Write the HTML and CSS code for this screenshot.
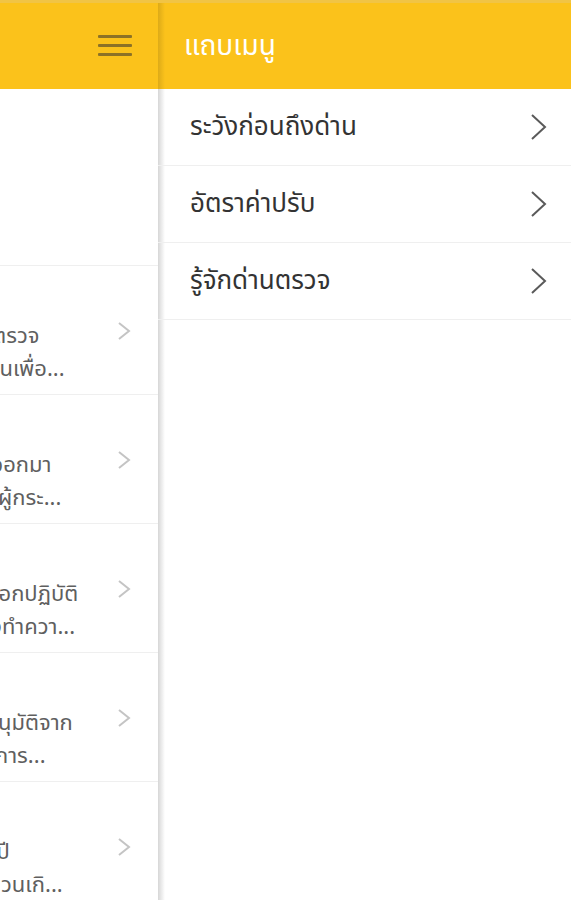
FILE: index.html
```html
<!DOCTYPE html>
<html>

<head>
  <meta charset="utf-8">
  <meta name="viewport" content="width=device-width">
  <title>แถบเมนู</title>
  <link rel="stylesheet" href="styles.css">
</head>

<body>
  <div class="app">
    <!-- หน้าหลักที่ถูกเลื่อนออกไปทางซ้าย -->
    <div class="page">
      <div class="page-inner">
        <div class="bar">
          <span class="burger">
            <i></i>
            <i></i>
            <i></i>
          </span>
        </div>
        <div class="banner"></div>
        <div class="row">
          <div class="row-text">
            <p>เมื่อพบด่านตรวจ</p>
            <p>ตำรวจตั้งด่านเพื่อ...</p>
          </div>
          <svg class="chev" viewBox="0 0 14 20"><polyline points="2,2 12,10 2,18" /></svg>
        </div>
        <div class="row">
          <div class="row-text">
            <p>ให้คนขับรถออกมา</p>
            <p>เพื่อตรวจหาผู้กระ...</p>
          </div>
          <svg class="chev" viewBox="0 0 14 20"><polyline points="2,2 12,10 2,18" /></svg>
        </div>
        <div class="row">
          <div class="row-text">
            <p>ได้รับคำสั่งออกปฏิบัติ</p>
            <p>ในหน้าที่ต้องทำควา...</p>
          </div>
          <svg class="chev" viewBox="0 0 14 20"><polyline points="2,2 12,10 2,18" /></svg>
        </div>
        <div class="row">
          <div class="row-text">
            <p>ที่ได้รับการอนุมัติจาก</p>
            <p>จากผู้บังคับการ...</p>
          </div>
          <svg class="chev" viewBox="0 0 14 20"><polyline points="2,2 12,10 2,18" /></svg>
        </div>
        <div class="row">
          <div class="row-text">
            <p>ก็ตั้งด่านทุกปี</p>
            <p>ในกรณีเร่งด่วนเกิ...</p>
          </div>
          <svg class="chev" viewBox="0 0 14 20"><polyline points="2,2 12,10 2,18" /></svg>
        </div>
      </div>
    </div>

    <!-- แถบเมนู -->
    <div class="drawer">
      <div class="drawer-head">แถบเมนู</div>
      <a class="item" href="#">ระวังก่อนถึงด่าน
        <svg class="arrow" viewBox="0 0 18 28"><polyline points="2,2 15,14 2,26" /></svg>
      </a>
      <a class="item" href="#">อัตราค่าปรับ
        <svg class="arrow" viewBox="0 0 18 28"><polyline points="2,2 15,14 2,26" /></svg>
      </a>
      <a class="item" href="#">รู้จักด่านตรวจ
        <svg class="arrow" viewBox="0 0 18 28"><polyline points="2,2 15,14 2,26" /></svg>
      </a>
    </div>
  </div>
</body>

</html>
```

FILE: styles.css
```css
* {
  margin: 0;
  padding: 0;
  box-sizing: border-box;
}

body {
  --yellow: #fbc21b;
  --line: #efefef;
  font-family: "Noto Sans", "Noto Sans Thai", "Tlwg Typist", sans-serif;
  background: #fff;
  overflow: hidden;
}

.app {
  display: flex;
  width: 571px;
  height: 900px;
  border-top: 3px solid #f1c445;
}

/* หน้าหลัก */
.page {
  width: 158px;
  flex: none;
  overflow: hidden;
}

.page-inner {
  width: 571px;
  margin-left: -413px;
}

.bar {
  height: 86px;
  background: var(--yellow);
  display: flex;
  align-items: center;
  justify-content: flex-end;
  padding-right: 26px;
}

.burger {
  display: flex;
  flex-direction: column;
  gap: 6px;
  width: 34px;
  margin-top: -1px;
}

.burger i {
  display: block;
  height: 3px;
  background: #8d7226;
  border-radius: 1px;
}

.banner {
  height: 177px;
  border-bottom: 1px solid var(--line);
}

.row {
  height: 129px;
  display: flex;
  align-items: flex-start;
  padding-left: 308px;
  padding-right: 27px;
  border-bottom: 1px solid var(--line);
}

.row-text {
  flex: 1;
  padding-top: 52px;
  color: #5f5f5f;
  font-size: 22px;
  line-height: 33px;
  white-space: nowrap;
  overflow: hidden;
}

.chev {
  width: 14px;
  height: 20px;
  margin-top: 55px;
  fill: none;
  stroke: #c4c4c4;
  stroke-width: 2;
}

/* แถบเมนู */
.drawer {
  flex: 1;
  display: flex;
  flex-direction: column;
  background: linear-gradient(90deg, rgba(0, 0, 0, .16), rgba(0, 0, 0, 0) 7px) #fff;
}

.drawer-head {
  height: 86px;
  display: flex;
  align-items: center;
  padding-left: 26px;
  background: linear-gradient(90deg, rgba(0, 0, 0, .12), rgba(0, 0, 0, 0) 7px) var(--yellow);
  color: #fff;
  font-size: 28px;
}

.item {
  height: 77px;
  display: flex;
  align-items: center;
  justify-content: space-between;
  padding-left: 32px;
  padding-right: 23px;
  color: #333;
  font-size: 26px;
  text-decoration: none;
  border-bottom: 1px solid var(--line);
}

.arrow {
  width: 18px;
  height: 28px;
  fill: none;
  stroke: #5a5a5a;
  stroke-width: 2;
}
```
